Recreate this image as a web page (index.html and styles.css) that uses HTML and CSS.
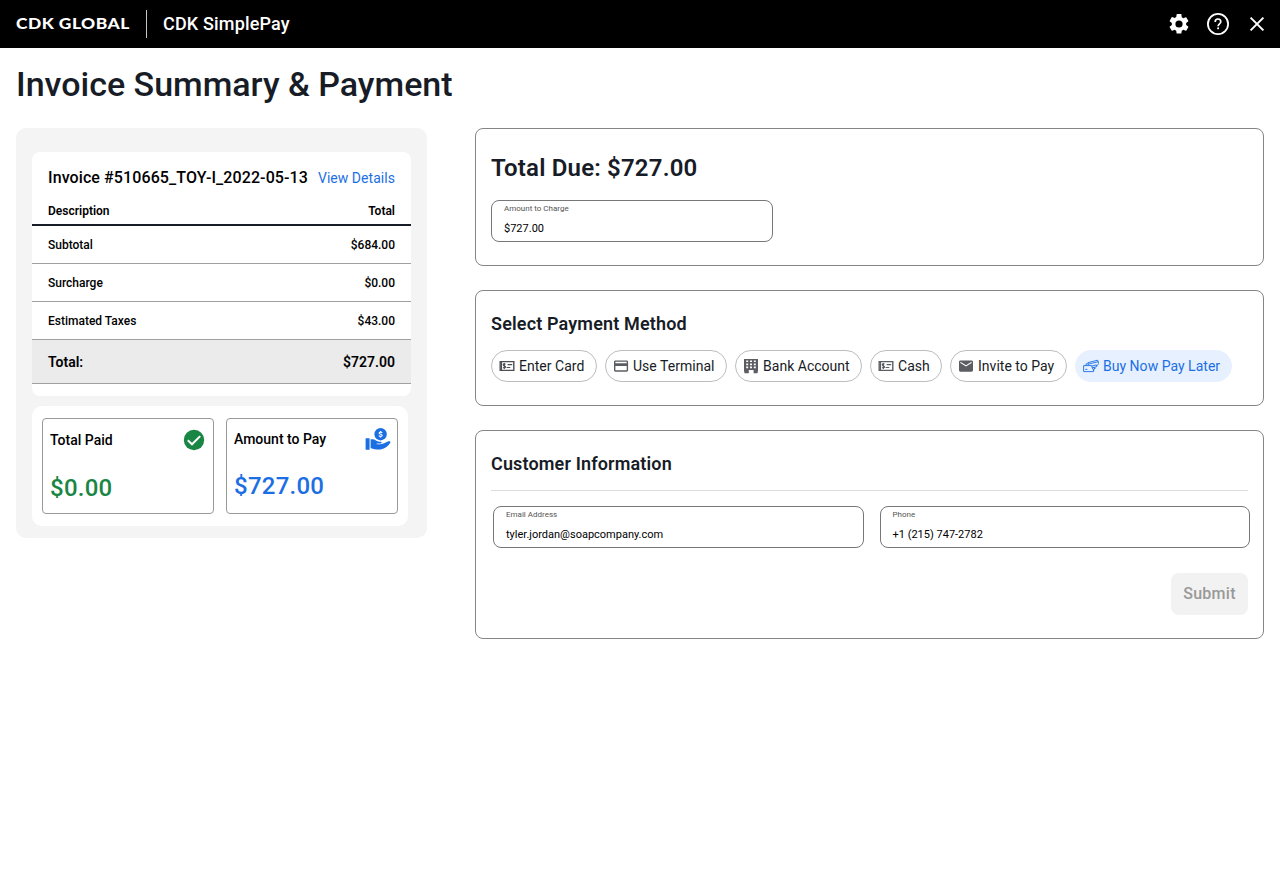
FILE: index.html
```html
<!DOCTYPE html>
<html lang="en">
<head>
<meta charset="utf-8">
<title>CDK SimplePay</title>
<link rel="stylesheet" href="styles.css">
</head>
<body>
<header class="topbar">
  <div class="brand"><span class="brand-text">CDK GLOBAL</span></div>
  <div class="product">CDK SimplePay</div>
  <div class="actions">
    <svg class="icon24" viewBox="0 0 24 24"><path fill="#fff" d="M19.14 12.94c.04-.3.06-.61.06-.94s-.02-.64-.07-.94l2.03-1.58a.49.49 0 0 0 .12-.61l-1.92-3.32a.49.49 0 0 0-.59-.22l-2.39.96a7 7 0 0 0-1.62-.94l-.36-2.54A.48.48 0 0 0 13.92 2h-3.84a.47.47 0 0 0-.47.41l-.36 2.54c-.59.24-1.13.57-1.62.94l-2.39-.96a.48.48 0 0 0-.59.22L2.74 8.87a.47.47 0 0 0 .12.61l2.03 1.58c-.05.3-.09.63-.09.94s.02.64.07.94l-2.03 1.58a.49.49 0 0 0-.12.61l1.92 3.32c.12.22.37.29.59.22l2.39-.96c.5.38 1.03.7 1.62.94l.36 2.54c.05.24.24.41.48.41h3.84c.24 0 .44-.17.47-.41l.36-2.54a6.6 6.6 0 0 0 1.62-.94l2.39.96c.22.08.47 0 .59-.22l1.92-3.32a.47.47 0 0 0-.12-.61zM12 15.6a3.6 3.6 0 1 1 0-7.2 3.6 3.6 0 0 1 0 7.2z"/></svg>
    <svg class="icon24" viewBox="0 0 24 24"><circle cx="12" cy="12" r="10.1" fill="none" stroke="#fff" stroke-width="1.8"/><path fill="none" stroke="#fff" stroke-width="1.7" d="M9.2 10.1v-.3a2.8 2.8 0 0 1 5.6 0c0 2-2.7 2.2-2.7 4.5"/><rect x="11.2" y="15.4" width="1.8" height="1.8" fill="#fff"/></svg>
    <svg class="icon24" viewBox="0 0 24 24"><path fill="none" stroke="#fff" stroke-width="2" d="M5.6 5.6l12.8 12.8M18.4 5.6L5.6 18.4"/></svg>
  </div>
</header>
<h1 class="title">Invoice Summary &amp; Payment</h1>
<main class="layout">
  <aside class="summary">
    <section class="invoice">
      <div class="invoice-head"><span class="invoice-no">Invoice #510665_TOY-I_2022-05-13</span><a class="details">View Details</a></div>
      <div class="row row-head"><span>Description</span><span>Total</span></div>
      <div class="row"><span>Subtotal</span><span>$684.00</span></div>
      <div class="row"><span>Surcharge</span><span>$0.00</span></div>
      <div class="row"><span>Estimated Taxes</span><span>$43.00</span></div>
      <div class="row row-total"><span>Total:</span><span>$727.00</span></div>
    </section>
    <section class="tiles">
      <div class="tile">
        <div class="tile-head"><span class="tile-label">Total Paid</span>
          <svg class="icon24" viewBox="0 0 24 24"><circle cx="12" cy="12" r="10.2" fill="#198644"/><path fill="none" stroke="#fff" stroke-width="2" d="M5.8 12.2l4.2 4.1 8.2-8.2"/></svg>
        </div>
        <div class="amount paid">$0.00</div>
      </div>
      <div class="tile pay">
        <div class="tile-head"><span class="tile-label">Amount to Pay</span>
          <svg class="hand" viewBox="0 0 26 24"><circle cx="15.6" cy="7.2" r="6.2" fill="#1c6fe3"/><path fill="none" stroke="#fff" stroke-width="1.1" d="M17.1 5.9c-.3-.6-.8-.8-1.5-.8-.9 0-1.5.3-1.5 1 0 1.5 3.1.7 3.1 2.2 0 .8-.8 1.1-1.6 1.1-.8 0-1.4-.3-1.7-.9M15.6 4v1M15.6 9.4v1.1"/><path fill="#1c6fe3" d="M.6 11.2h4v11.6h-4zM5.6 12.2h2.1c2.2 0 3.5 1.8 5.5 2.2 1.5.3 3.5-.1 3.5 1 0 .8-1.1 1.2-2.6 1.2h-2.4v.6h3.6c3.3 0 5.8-2.3 8.2-2.9 1.1-.3 2.5.2 1.8 1.4-1.7 2.8-5.4 6.1-9.5 6.7-3.4.5-6.9-.3-10.2-1.5z"/></svg>
        </div>
        <div class="amount due">$727.00</div>
      </div>
    </section>
  </aside>
  <div class="panels">
    <section class="panel due-panel">
      <h2 class="due-title">Total Due: $727.00</h2>
      <div class="field charge"><span class="label">Amount to Charge</span><span class="value">$727.00</span></div>
    </section>
    <section class="panel method-panel">
      <h3 class="section-title">Select Payment Method</h3>
      <div class="chips">
        <div class="chip c1"><svg class="chip-icon" viewBox="0 0 16 16"><path fill="none" stroke="#4c4e54" stroke-width="1.4" d="M1.2 3.6h13.6v8.8H1.2z"/><path fill="none" stroke="#4c4e54" stroke-width="1.1" d="M8.6 6.6h4.6M7.6 9.5h3.7M2.5 4v8"/><path fill="none" stroke="#4c4e54" stroke-width="1.2" d="M6.4 6.4c-.4-.6-2.2-.7-2.2.4 0 1.4 2.3.8 2.3 2.1 0 1.1-1.8 1.1-2.4.4M5.3 5.1v5.9"/></svg>Enter Card</div>
        <div class="chip c2"><svg class="chip-icon" viewBox="0 0 16 16"><path fill="#5c5d62" fill-rule="evenodd" d="M2.4 2.4h11.3c.8 0 1.4.6 1.4 1.4v8.5c0 .8-.6 1.4-1.4 1.4H2.4c-.8 0-1.4-.6-1.4-1.4V3.8c0-.8.6-1.4 1.4-1.4zm0 1.4v1.4h11.3V3.8zm0 4.2v4.3h11.3V8z"/></svg>Use Terminal</div>
        <div class="chip c3"><svg class="chip-icon" viewBox="0 0 16 16"><path fill="#5c5d62" fill-rule="evenodd" d="M1 1h14v12.5h-.4v1.7h-4v-3.2H5.8v3.2H1.4v-1.7H1zm2.2 1.4v1.7h2V2.4zm3.8 0v1.7h2V2.4zm3.8 0v1.7h2V2.4zM3.2 5.5v1.7h2V5.5zm3.8 0v1.7h2V5.5zm3.8 0v1.7h2V5.5zM3.2 8.6v1.7h2V8.6zm3.8 0v1.7h2V8.6zm3.8 0v1.7h2V8.6z"/></svg>Bank Account</div>
        <div class="chip c4"><svg class="chip-icon" viewBox="0 0 16 16"><path fill="none" stroke="#5c5d62" stroke-width="1.4" d="M1.2 3.6h13.6v8.8H1.2z"/><path fill="none" stroke="#5c5d62" stroke-width="1.1" d="M8.6 6.6h4.6M7.6 9.5h3.7M2.5 4v8"/><path fill="none" stroke="#5c5d62" stroke-width="1.2" d="M6.4 6.4c-.4-.6-2.2-.7-2.2.4 0 1.4 2.3.8 2.3 2.1 0 1.1-1.8 1.1-2.4.4M5.3 5.1v5.9"/></svg>Cash</div>
        <div class="chip c5"><svg class="chip-icon" viewBox="0 0 16 16"><path fill="#5c5d62" fill-rule="evenodd" d="M2.4 2.4h11.2c.8 0 1.4.6 1.4 1.4v8.5c0 .8-.6 1.4-1.4 1.4H2.4c-.8 0-1.4-.6-1.4-1.4V3.8c0-.8.6-1.4 1.4-1.4zm0 1.4v1.3L8 8.6l5.6-3.5V3.8L8 7.3z"/></svg>Invite to Pay</div>
        <div class="chip c6"><svg class="chip-icon" viewBox="0 0 16 16"><g fill="none" stroke="#1c6fe3" stroke-width=".9"><path d="M5.4 7L4.8 4.7l9.9-2.5 1 3.5-2.1 2.4M5.3 6.2l10-2.5M.6 7.6h8.2M.6 7.6v6h9.9v-2.2M2.2 11.4h2.2M3 7.4V5.9h1.6M8.3 8.2l5-1.3.5 1.7-3.4 1M8.8 8.8l1.9 3.8.3-1.9 1.4-.5z"/></g></svg>Buy Now Pay Later</div>
      </div>
    </section>
    <section class="panel customer-panel">
      <h3 class="section-title">Customer Information</h3>
      <div class="fields">
        <div class="field"><span class="label">Email Address</span><span class="value">tyler.jordan@soapcompany.com</span></div>
        <div class="field"><span class="label">Phone</span><span class="value">+1 (215) 747-2782</span></div>
      </div>
      <div class="submit-row"><button class="submit" disabled>Submit</button></div>
    </section>
  </div>
</main>
</body>
</html>
```
FILE: styles.css
```css
* { box-sizing: border-box; }
body { margin: 0; background: #fff; color: #000; font-family: Roboto, "Liberation Sans", sans-serif; font-weight: 500; }
h1, h2, h3 { margin: 0; font-weight: 500; color: #171c26; white-space: nowrap; }
svg { display: block; flex: none; }
.icon24 { width: 24px; height: 24px; }

.topbar { height: 48px; background: #000; color: #fff; display: flex; align-items: center; padding: 0 11px 0 16px; }
.brand { width: 131px; height: 28px; border-right: 1px solid #c4c4c4; display: flex; align-items: center; }
.brand-text { font: 900 14.5px/18px Lato, sans-serif; letter-spacing: .4px; white-space: nowrap; transform: scaleX(1.2); transform-origin: left; }
.product { margin-left: 16px; font-size: 18px; line-height: 24px; letter-spacing: .17px; }
.actions { margin-left: auto; display: flex; gap: 15px; }

.title { font-size: 34px; line-height: 40px; padding: 16px 16px 0; height: 80px; }
.layout { display: grid; grid-template-columns: 411px 789px; gap: 48px; padding: 0 16px; align-items: start; }

.summary { height: 410px; background: #f4f4f4; border-radius: 10px; padding: 24px 16px 12px; }
.invoice { height: 244px; background: #fff; border-radius: 8px; }
.invoice-head { height: 46px; padding: 6px 16px 0; display: flex; justify-content: space-between; align-items: center; white-space: nowrap; }
.invoice-no { font-size: 16px; letter-spacing: .1px; padding-bottom: 2px; }
.details { font-size: 14px; font-weight: 400; color: #1c6fe3; letter-spacing: .04px; }
.row { height: 38px; padding: 0 16px; display: flex; justify-content: space-between; align-items: center; font-size: 12px; border-bottom: 1px solid #a0a0a0; }
.row-head { height: 28px; border-bottom: 2px solid #171c26; font-weight: 600; }
.row-total { height: 44px; font-size: 14px; font-weight: 600; background: #ebebeb; }

.tiles { width: 376px; height: 120px; margin-top: 10px; padding: 12px 10px; background: #fff; border-radius: 10px; display: flex; gap: 12px; }
.tile { flex: 1; height: 96px; border: 1px solid #999; border-radius: 4px; padding: 9px 7px 0; }
.tile-head { display: flex; justify-content: space-between; align-items: center; height: 24px; }
.tile-label { font-size: 14px; }
.hand { width: 26px; height: 24px; margin-right: -.5px; }
.amount { margin-top: 22px; font-size: 24px; line-height: 28px; letter-spacing: .25px; }
.pay { padding-top: 8px; }
.pay .amount { margin-top: 21px; }
.paid { color: #198644; }
.due { color: #1c6fe3; }

.panels { display: flex; flex-direction: column; gap: 24px; }
.panel { border: 1px solid #858585; border-radius: 8px; padding: 0 15px; }
.due-panel { height: 138px; padding-top: 23px; }
.due-title { font-size: 24px; line-height: 32px; margin-bottom: 16px; font-weight: 600; letter-spacing: .18px; }
.field { height: 42px; border: 1px solid #777; border-radius: 8px; padding: 2px 12px 0; display: flex; flex-direction: column; }
.label { font-size: 8px; line-height: 12px; font-weight: 400; color: #555; }
.value { font-size: 11px; line-height: 16px; margin-top: 6px; font-weight: 400; }
.charge { width: 282px; }

.method-panel { height: 116px; padding-top: 21px; }
.section-title { font-size: 18px; line-height: 24px; font-weight: 600; letter-spacing: .15px; }
.chips { display: flex; gap: 8px; margin-top: 14px; }
.chip { height: 32px; border: 1px solid #bdbdbd; border-radius: 16px; padding: 0 0 0 7px; display: flex; align-items: center; gap: 4px; font-size: 14px; font-weight: 400; color: #171c26; white-space: nowrap; letter-spacing: .02px; }
.chip-icon { width: 16px; height: 16px; }
.c1 { width: 106px; }
.c2 { width: 122px; }
.c3 { width: 127px; }
.c4 { width: 72px; }
.c5 { width: 117px; }
.c6 { width: 157px; background: #e6f0ff; border-color: #e6f0ff; color: #1c6fe3; }

.customer-panel { height: 209px; padding-top: 21px; }
.customer-panel .section-title { height: 39px; border-bottom: 1px solid #dcdcdc; }
.fields { display: grid; grid-template-columns: 1fr 1fr; gap: 16px; margin: 15px -2px 0 2px; }
.submit-row { display: flex; justify-content: flex-end; margin-top: 25px; }
.submit { width: 77px; height: 42px; border: 0; border-radius: 8px; background: #f2f2f2; color: #999; padding: 0 0 2px; font: 500 16px Roboto, sans-serif; letter-spacing: .25px; }
```
